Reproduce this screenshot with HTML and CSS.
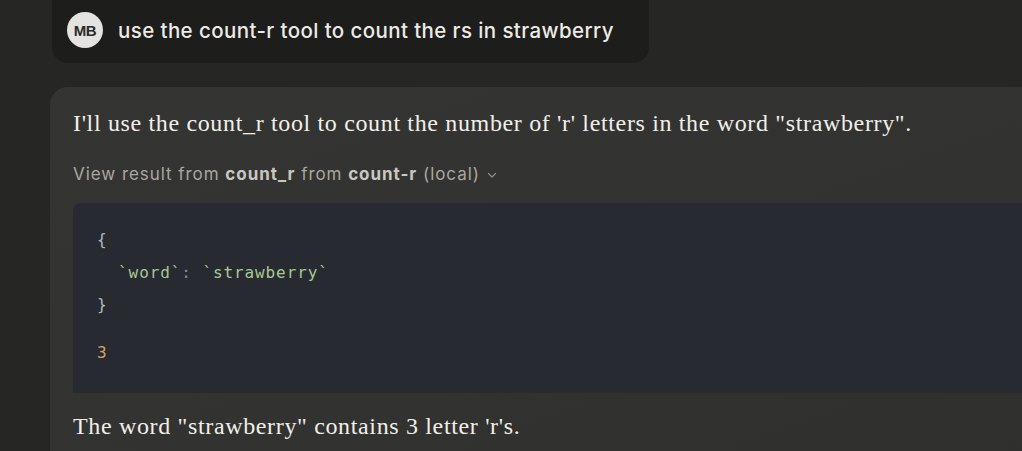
FILE: index.html
```html
<!DOCTYPE html>
<html lang="en">
<head>
<meta charset="utf-8">
<title>count-r</title>
<link rel="stylesheet" href="styles.css">
</head>
<body>
<div class="thread">
  <div class="user-msg">
    <div class="avatar">MB</div>
    <div class="user-text">use the count-r tool to count the rs in strawberry</div>
  </div>
  <div class="assistant">
    <p class="prose">I'll use the count_r tool to count the number of 'r' letters in the word "strawberry".</p>
    <div class="tool-line">View result from <b>count_r</b> from <b>count-r</b> (local) <svg class="chev" width="12" height="12" viewBox="0 0 12 12"><path d="M2.5 4.5 L6 8 L9.5 4.5" fill="none" stroke="currentColor" stroke-width="1.2" stroke-linecap="round" stroke-linejoin="round"/></svg></div>
    <div class="code">
      <pre class="code-in"><span class="punc">{</span>
  <span class="str">`word`</span><span class="colon">:</span> <span class="str">`strawberry`</span>
<span class="punc">}</span></pre>
      <pre class="code-out"><span class="num">3</span></pre>
    </div>
    <p class="prose answer">The word "strawberry" contains 3 letter 'r's.</p>
  </div>
</div>
</body>
</html>
```
FILE: styles.css
```css
html, body {
  margin: 0;
  padding: 0;
  background: #262624;
  height: 100%;
  overflow: hidden;
}
.thread {
  padding-left: 52px;
  display: flex;
  flex-direction: column;
  align-items: flex-start;
}
.user-msg {
  margin-top: -14px;
  display: flex;
  align-items: center;
  gap: 15px;
  background: #1d1d1c;
  border-radius: 16px;
  padding: 26px 35px 15px 15px;
}
.avatar {
  width: 36px;
  height: 36px;
  border-radius: 50%;
  background: #e4e3df;
  color: #2a2a28;
  font-family: "Liberation Sans", Arial, sans-serif;
  font-weight: 700;
  font-size: 15px;
  letter-spacing: -0.5px;
  display: flex;
  align-items: center;
  justify-content: center;
}
.user-text {
  font-family: Inter, "Liberation Sans", sans-serif;
  font-size: 20.5px;
  font-weight: 500;
  color: #ecebe6;
  letter-spacing: 0.4px;
}
.assistant {
  align-self: stretch;
  margin-top: 24px;
  margin-left: -2px;
  margin-right: -40px;
  background: linear-gradient(160deg, #343432 0%, #323230 60%, #2f2f2d 100%);
  border-radius: 18px 0 0 0;
  padding: 20px 0 8px 23px;
}
.prose {
  margin: 0;
  font-family: "Liberation Serif", "Times New Roman", serif;
  font-size: 24px;
  line-height: 33px;
  letter-spacing: 0.65px;
  color: #f0efea;
}
.tool-line {
  margin-top: 23px;
  font-family: Inter, "Liberation Sans", sans-serif;
  font-size: 17px;
  line-height: 22px;
  letter-spacing: 0.95px;
  color: #a9a7a0;
}
.tool-line b {
  color: #c9c7c0;
  font-weight: 700;
}
.chev {
  color: #8f8d86;
  vertical-align: -1px;
}
.code {
  margin-top: 18px;
  background: #282a32;
  border-radius: 8px 0 0 0;
  padding: 21px 24px 24px 24px;
}
.code pre {
  margin: 0;
  font-family: "DejaVu Sans Mono", monospace;
  font-size: 16px;
  line-height: 32.5px;
  letter-spacing: 0.9px;
  color: #aeb0b8;
}
.code-out {
  margin-top: 15px !important;
}
.str { color: #a9c98e; }
.colon { color: #7f8ca6; }
.punc { color: #b4b6be; }
.num { color: #d8a06a; }
.answer {
  margin-top: 17px;
}
```
